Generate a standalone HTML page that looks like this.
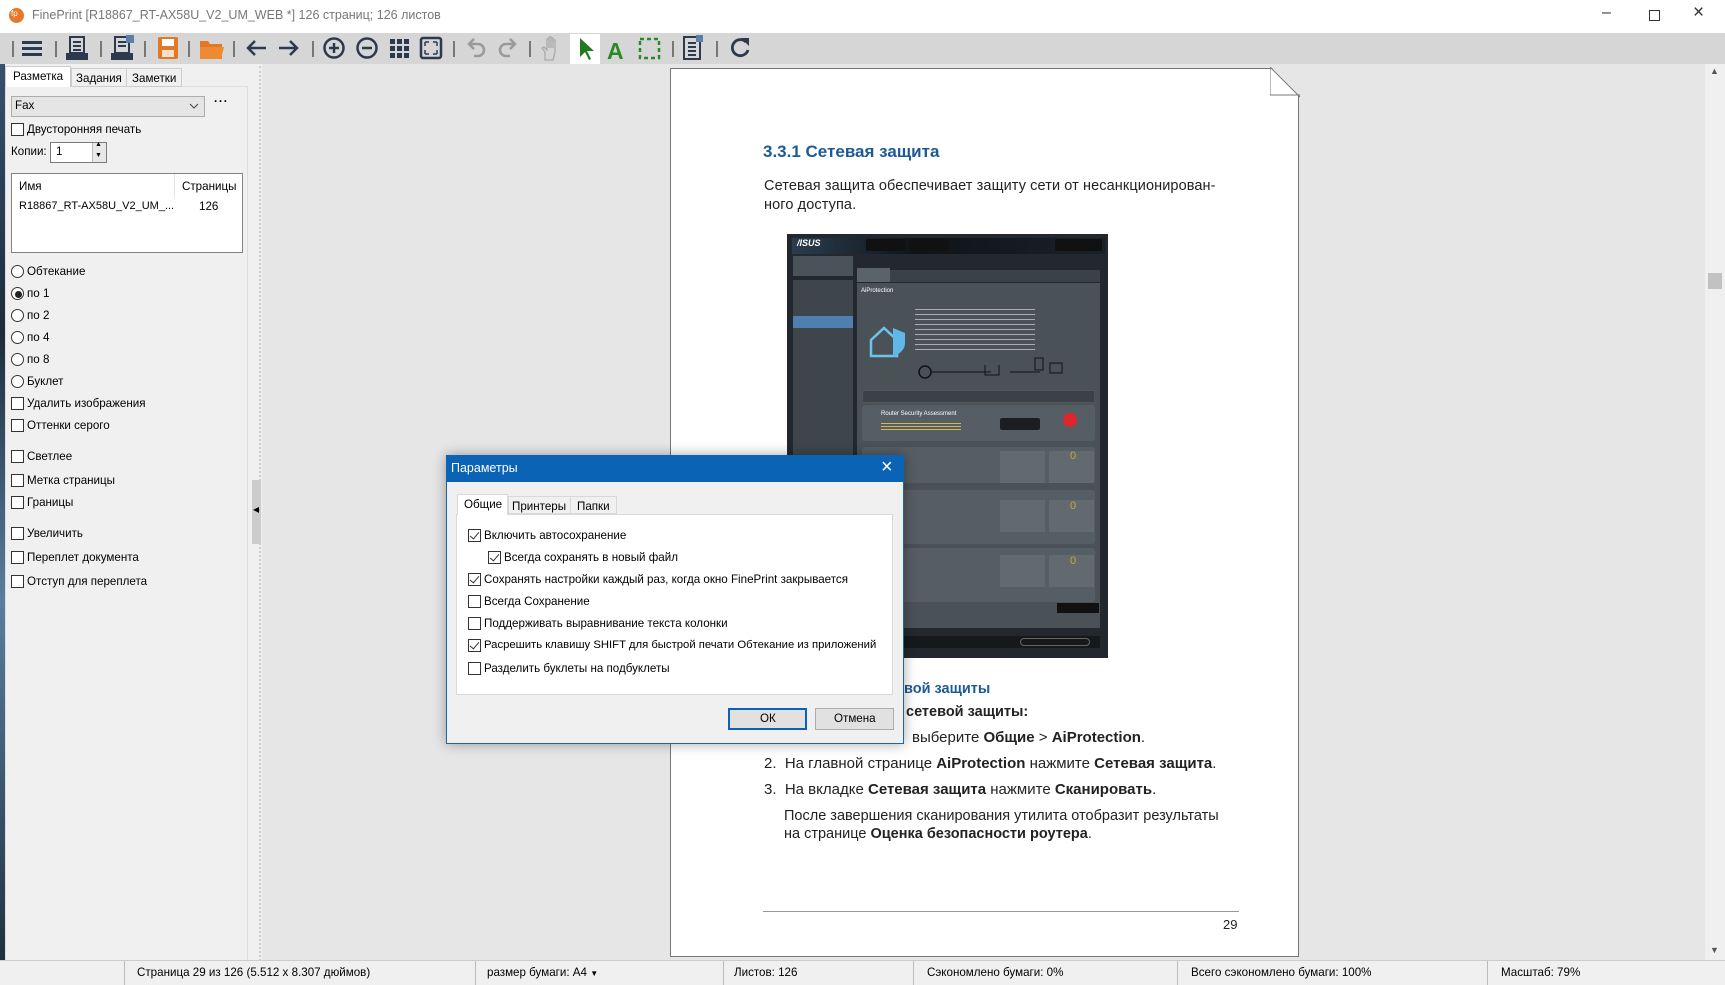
<!DOCTYPE html>
<html><head><meta charset="utf-8"><style>
*{box-sizing:border-box;margin:0;padding:0}
body{width:1725px;height:985px;position:relative;overflow:hidden;background:#e6e6e6;font-family:"Liberation Sans","DejaVu Sans",sans-serif;font-size:11.6px;color:#000}
.a{position:absolute}
.t{position:absolute;white-space:nowrap}
.cb{position:absolute;width:13px;height:13px;border:1px solid #333;background:#fff}
.cb.k::after{content:"";position:absolute;left:3px;top:0px;width:4px;height:8px;border:solid #333;border-width:0 1.5px 1.5px 0;transform:rotate(40deg)}
.rd{position:absolute;width:13px;height:13px;border:1px solid #333;border-radius:50%;background:#fff}
.sep{position:absolute;top:41px;width:2px;height:16px;background:#777}
.sb{position:absolute;top:961px;height:24px;border-left:1px solid #bbb}
.pg{font-family:"Liberation Sans Narrow","Liberation Sans",sans-serif;color:#222}
</style></head><body>
<div class="a" style="left:0;top:0;width:1725px;height:33px;background:#fff"></div>
<div class="a" style="left:9px;top:8px;width:15px;height:15px;border-radius:50%;background:#e8772a"></div>
<div class="t" style="left:11px;top:9px;font-size:8px;color:#fff">fp</div>
<div class="t" style="left:32px;top:8px;font-size:12.5px;color:#777">FinePrint [R18867_RT-AX58U_V2_UM_WEB *] 126 страниц; 126 листов</div>
<div class="t" style="left:1602px;top:4px;font-size:16px;color:#333">&#8211;</div>
<div class="a" style="left:1649px;top:10px;width:11px;height:11px;border:1px solid #333"></div>
<div class="t" style="left:1693px;top:2px;font-size:19px;color:#333">&#215;</div>
<div class="a" style="left:0;top:33px;width:1725px;height:31px;background:#d6d6d6"></div>
<div class="sep" style="left:12px;width:2px"></div><div class="sep" style="left:55px"></div><div class="sep" style="left:100px"></div><div class="sep" style="left:144px"></div><div class="sep" style="left:188px"></div><div class="sep" style="left:233px"></div><div class="sep" style="left:312px"></div><div class="sep" style="left:453px"></div><div class="sep" style="left:529px"></div><div class="sep" style="left:672px"></div><div class="sep" style="left:716px"></div>
<div class="a" style="left:570px;top:34px;width:30px;height:30px;background:#fff"></div>
<svg class="a" style="left:0;top:33px" width="760" height="31">
<g fill="#2b3a4f"><rect x="22" y="8" width="20" height="3"/><rect x="22" y="14" width="20" height="3"/><rect x="22" y="20" width="20" height="3"/></g>
<g fill="none" stroke="#2b3a4f" stroke-width="2"><rect x="70" y="4" width="14" height="16"/><path d="M73 9h8M73 13h8M73 17h8"/></g><rect x="66" y="20" width="22" height="7" fill="#2b3a4f"/>
<g fill="none" stroke="#2b3a4f" stroke-width="2"><rect x="115" y="4" width="14" height="16"/><path d="M118 9h8M118 13h8"/></g><rect x="111" y="20" width="22" height="7" fill="#2b3a4f"/><rect x="126" y="2" width="8" height="8" fill="#5b7fa8"/>
<rect x="158" y="4" width="20" height="22" rx="2" fill="#e07a28"/><rect x="162" y="6" width="12" height="7" fill="#fff"/><rect x="162" y="17" width="12" height="7" fill="#fbe0c8"/>
<path d="M200 8h8l2 3h12v15h-22z" fill="#e07a28"/><path d="M200 14h24l-3 12h-21z" fill="#f08a30"/>
<g fill="none" stroke="#2b3a4f" stroke-width="2.5"><path d="M266 15h-18M255 8l-7 7 7 7"/><path d="M279 15h18M290 8l7 7-7 7"/>
<circle cx="334" cy="15" r="9.5"/><path d="M329 15h10M334 10v10"/><circle cx="367" cy="15" r="9.5"/><path d="M362 15h10"/></g>
<g fill="#2b3a4f"><rect x="390" y="6" width="5" height="5"/><rect x="397" y="6" width="5" height="5"/><rect x="404" y="6" width="5" height="5"/><rect x="390" y="13" width="5" height="5"/><rect x="397" y="13" width="5" height="5"/><rect x="404" y="13" width="5" height="5"/><rect x="390" y="20" width="5" height="5"/><rect x="397" y="20" width="5" height="5"/><rect x="404" y="20" width="5" height="5"/></g>
<rect x="421" y="5" width="20" height="20" rx="2" fill="none" stroke="#2b3a4f" stroke-width="2.5"/><path d="M425 9h4M425 9v4M437 9h-4M437 9v4M425 21h4M425 21v-4M437 21h-4M437 21v-4" stroke="#2b3a4f" stroke-width="1.5"/>
<g fill="none" stroke="#999" stroke-width="2.5"><path d="M470 11h8a6 6 0 0 1 0 12h-4M474 6l-5 5 5 5"/><path d="M514 11h-8a6 6 0 0 0 0 12h4M510 6l5 5-5 5"/></g>
<path d="M545 27v-8l-3-4 2-1 3 3v-11h2v9-11h2v11-10h2v10-8h2v12l-2 8z" fill="none" stroke="#aaa" stroke-width="1.3"/>
<path d="M580 5v19l5-5 4 8 2-1-4-8h7z" fill="#1e7b1e"/>
<text x="607" y="26" font-family="Liberation Sans" font-weight="bold" font-size="23" fill="#2a8a2a">A</text>
<rect x="640" y="6" width="19" height="19" fill="none" stroke="#2a8a2a" stroke-width="2.5" stroke-dasharray="4 3"/>
<g fill="none" stroke="#2b3a4f" stroke-width="2"><rect x="684" y="4" width="16" height="22"/><path d="M688 10h8M688 14h8M688 18h8M688 22h8"/></g><rect x="696" y="2" width="7" height="7" fill="#5b7fa8"/>
<path d="M746 9a8 8 0 1 0 2 8" fill="none" stroke="#2b3a4f" stroke-width="2.8"/><path d="M741 5h8v8z" fill="#2b3a4f"/>
</svg>
<div class="a" style="left:0;top:64px;width:262px;height:897px;background:#f0f0f0"></div>
<div class="a" style="left:0;top:64px;width:5px;height:897px;background:linear-gradient(#36506e,#1d2c3c 30%,#5a7ea0 60%,#203040)"></div>
<div class="a" style="left:5px;top:86px;width:243px;height:875px;border:1px solid #ddd"></div>
<div class="a" style="left:5px;top:66px;width:66px;height:21px;background:#fff;border:1px solid #ccc;border-bottom:none"></div>
<div class="a" style="left:71px;top:68px;width:56px;height:19px;background:#f0f0f0;border:1px solid #ccc"></div>
<div class="a" style="left:126px;top:68px;width:56px;height:19px;background:#f0f0f0;border:1px solid #ccc"></div>
<div class="t" style="left:13px;top:70px">Разметка</div><div class="t" style="left:76px;top:72px">Задания</div><div class="t" style="left:132px;top:72px">Заметки</div>
<div class="a" style="left:11px;top:96px;width:194px;height:21px;background:#e5e5e5;border:1px solid #adadad"></div>
<div class="t" style="left:15px;top:99px">Fax</div>
<svg class="a" style="left:189px;top:102px" width="10" height="8"><path d="M1 2l4 4 4-4" fill="none" stroke="#444"/></svg>
<div class="t" style="left:214px;top:95px;font-weight:bold;letter-spacing:1px">···</div>
<div class="cb" style="left:11px;top:123px"></div><div class="t" style="left:27px;top:123px">Двусторонняя печать</div>
<div class="t" style="left:11px;top:145px">Копии:</div>
<div class="a" style="left:50px;top:142px;width:57px;height:21px;background:#fff;border:1px solid #7a7a7a"></div>
<div class="t" style="left:56px;top:145px">1</div>
<div class="a" style="left:92px;top:143px;width:14px;height:19px;background:#e8e8e8;border-left:1px solid #bbb"></div>
<div class="t" style="left:95px;top:141px;font-size:7px">▲</div><div class="t" style="left:95px;top:152px;font-size:7px">▼</div>
<div class="a" style="left:11px;top:173px;width:232px;height:80px;background:#fff;border:1px solid #828282"></div>
<div class="a" style="left:174px;top:174px;width:1px;height:24px;background:#e5e5e5"></div>
<div class="t" style="left:19px;top:180px">Имя</div><div class="t" style="left:182px;top:180px">Страницы</div>
<div class="t" style="left:19px;top:200px;font-size:11px">R18867_RT-AX58U_V2_UM_...</div><div class="t" style="left:199px;top:200px">126</div>
<div class="rd" style="left:11px;top:265px"></div><div class="t" style="left:27px;top:265px">Обтекание</div>
<div class="rd" style="left:11px;top:287px"></div><div class="a" style="left:15px;top:291px;width:7px;height:7px;border-radius:50%;background:#222"></div><div class="t" style="left:27px;top:287px">по 1</div>
<div class="rd" style="left:11px;top:309px"></div><div class="t" style="left:27px;top:309px">по 2</div>
<div class="rd" style="left:11px;top:331px"></div><div class="t" style="left:27px;top:331px">по 4</div>
<div class="rd" style="left:11px;top:353px"></div><div class="t" style="left:27px;top:353px">по 8</div>
<div class="rd" style="left:11px;top:375px"></div><div class="t" style="left:27px;top:375px">Буклет</div>
<div class="cb" style="left:11px;top:397px"></div><div class="t" style="left:27px;top:397px">Удалить изображения</div>
<div class="cb" style="left:11px;top:419px"></div><div class="t" style="left:27px;top:419px">Оттенки серого</div>
<div class="cb" style="left:11px;top:450px"></div><div class="t" style="left:27px;top:450px">Светлее</div>
<div class="cb" style="left:11px;top:474px"></div><div class="t" style="left:27px;top:474px">Метка страницы</div>
<div class="cb" style="left:11px;top:496px"></div><div class="t" style="left:27px;top:496px">Границы</div>
<div class="cb" style="left:11px;top:527px"></div><div class="t" style="left:27px;top:527px">Увеличить</div>
<div class="cb" style="left:11px;top:551px"></div><div class="t" style="left:27px;top:551px">Переплет документа</div>
<div class="cb" style="left:11px;top:575px"></div><div class="t" style="left:27px;top:575px">Отступ для переплета</div>
<div class="a" style="left:252px;top:480px;width:9px;height:64px;background:#ccc"></div>
<div class="t" style="left:253px;top:505px;font-size:8px">◀</div>
<div class="a" style="left:259px;top:66px;width:0;height:895px;border-left:2px dotted #ccc"></div>
<div class="a" style="left:1705px;top:64px;width:20px;height:897px;background:#f0f0f0"></div>
<div class="t" style="left:1710px;top:66px;font-size:9px;color:#555">▲</div>
<div class="t" style="left:1710px;top:945px;font-size:9px;color:#555">▼</div>
<div class="a" style="left:1708px;top:273px;width:14px;height:16px;background:#c2c2c2"></div>
<div class="a" style="left:670px;top:68px;width:629px;height:889px;background:#fff;border:1px solid #777"></div>
<svg class="a" style="left:1270px;top:67px" width="31" height="31"><polygon points="1,0 31,0 31,30" fill="#e6e6e6"/><path d="M0 0v28h30M0 0l30 30" fill="none" stroke="#777"/></svg>
<div class="t pg" style="left:763px;top:142px;font-size:17px;font-weight:bold;color:#1c5a96">3.3.1 Сетевая защита</div>
<div class="t pg" style="left:764px;top:178px;font-size:14.5px;letter-spacing:0.1px">Сетевая защита обеспечивает защиту сети от несанкционирован-</div>
<div class="t pg" style="left:764px;top:197px;font-size:14.5px;letter-spacing:0.1px">ного доступа.</div>
<div class="a" style="left:787px;top:234px;width:321px;height:424px;background:#22282d"></div>
<div class="a" style="left:792px;top:238px;width:313px;height:16px;background:linear-gradient(90deg,#2a3d4e,#0e1418 40%,#1a2228)"></div>
<div class="t" style="left:797px;top:238px;font-size:9px;color:#fff;font-style:italic;font-weight:bold">/ISUS</div>
<div class="a" style="left:866px;top:239px;width:40px;height:12px;background:#111;border-radius:2px"></div>
<div class="a" style="left:909px;top:239px;width:40px;height:12px;background:#111;border-radius:2px"></div>
<div class="a" style="left:1055px;top:239px;width:47px;height:12px;background:#111"></div>
<div class="a" style="left:793px;top:256px;width:60px;height:20px;background:#4a535a"></div>
<div class="a" style="left:793px;top:280px;width:60px;height:175px;background:#3e464c"></div>
<div class="a" style="left:793px;top:316px;width:60px;height:12px;background:#4f7fb0"></div>
<div class="a" style="left:793px;top:412px;width:60px;height:120px;background:#3e464c"></div>
<div class="a" style="left:857px;top:270px;width:243px;height:12px;background:#3a4248"></div>
<div class="a" style="left:857px;top:268px;width:33px;height:14px;background:#5a636a"></div>
<div class="a" style="left:857px;top:283px;width:243px;height:345px;background:#4a5258"></div>
<div class="t" style="left:861px;top:288px;font-size:6px;color:#fff">AiProtection</div>
<svg class="a" style="left:868px;top:320px" width="50" height="40"><path d="M3 20l13-12 13 12v16h-26z" fill="none" stroke="#6ec3ec" stroke-width="2.5"/><path d="M25 8l12 5v10c0 7-6 11-12 14z" fill="#5fb8e6"/></svg>
<div class="a" style="left:915px;top:305px;width:120px;height:48px;background:repeating-linear-gradient(#4a5258 0 4px,#aab 4px 5px)"></div>
<svg class="a" style="left:915px;top:355px" width="150" height="30"><circle cx="10" cy="17" r="6" fill="none" stroke="#111" stroke-width="1.5"/><path d="M16 17h60M95 17h30" stroke="#111"/><path d="M70 10v10h14v-10" stroke="#111" fill="none"/><rect x="120" y="3" width="8" height="12" fill="none" stroke="#111"/><rect x="135" y="8" width="12" height="10" fill="none" stroke="#111"/></svg>
<div class="a" style="left:862px;top:390px;width:233px;height:13px;background:#3a4248;border:1px solid #555"></div>
<div class="a" style="left:862px;top:405px;width:233px;height:36px;background:#555e64;border-radius:3px"></div>
<div class="t" style="left:881px;top:411px;font-size:6px;color:#fff">Router Security Assessment</div>
<div class="a" style="left:881px;top:421px;width:80px;height:10px;background:repeating-linear-gradient(#555e64 0 2px,#d4b84a 2px 3px)"></div>
<div class="a" style="left:1000px;top:418px;width:40px;height:12px;background:#1a1e22;border-radius:2px"></div>
<div class="a" style="left:1063px;top:413px;width:14px;height:14px;border-radius:50%;background:#e0252b"></div>
<div class="a" style="left:862px;top:447px;width:233px;height:36px;background:#555e64;border-radius:3px"></div>
<div class="a" style="left:862px;top:490px;width:233px;height:54px;background:#555e64;border-radius:3px"></div>
<div class="a" style="left:862px;top:548px;width:233px;height:54px;background:#555e64;border-radius:3px"></div>
<div class="a" style="left:1000px;top:451px;width:45px;height:32px;background:#62696f"></div><div class="a" style="left:1049px;top:451px;width:45px;height:32px;background:#62696f"></div>
<div class="a" style="left:1000px;top:500px;width:45px;height:32px;background:#62696f"></div><div class="a" style="left:1049px;top:500px;width:45px;height:32px;background:#62696f"></div>
<div class="a" style="left:1000px;top:555px;width:45px;height:32px;background:#62696f"></div><div class="a" style="left:1049px;top:555px;width:45px;height:32px;background:#62696f"></div>
<div class="t" style="left:1070px;top:450px;font-size:11px;color:#c9a93a">0</div><div class="t" style="left:1070px;top:500px;font-size:11px;color:#c9a93a">0</div><div class="t" style="left:1070px;top:555px;font-size:11px;color:#c9a93a">0</div>
<div class="a" style="left:1057px;top:603px;width:42px;height:10px;background:#111"></div>
<div class="a" style="left:857px;top:636px;width:243px;height:12px;background:#15191c"></div>
<div class="a" style="left:1020px;top:638px;width:70px;height:8px;border:1px solid #666;border-radius:4px"></div>
<div class="t pg" style="left:904px;top:681px;font-size:14.5px;font-weight:bold;color:#1c5a96">вой защиты</div>
<div class="t pg" style="left:906px;top:704px;font-size:14.5px;font-weight:bold">сетевой защиты:</div>
<div class="t pg" style="left:912px;top:729px;font-size:15px">выберите <b>Общие</b> &gt; <b>AiProtection</b>.</div>
<div class="t pg" style="left:764px;top:755px;font-size:15px">2.&nbsp; На главной странице <b>AiProtection</b> нажмите <b>Сетевая защита</b>.</div>
<div class="t pg" style="left:764px;top:781px;font-size:15px">3.&nbsp; На вкладке <b>Сетевая защита</b> нажмите <b>Сканировать</b>.</div>
<div class="t pg" style="left:784px;top:808px;font-size:14.5px">После завершения сканирования утилита отобразит результаты</div>
<div class="t pg" style="left:784px;top:826px;font-size:14.5px">на странице <b>Оценка безопасности роутера</b>.</div>
<div class="a" style="left:763px;top:911px;width:476px;height:1px;background:#999"></div>
<div class="t pg" style="left:1223px;top:917px;font-size:13px">29</div>
<div class="a" style="left:446px;top:455px;width:458px;height:289px;background:#f0f0f0;border:1px solid #1c64b0;box-shadow:0 0 12px rgba(0,0,0,.35)"></div>
<div class="a" style="left:446px;top:455px;width:458px;height:27px;background:#0b63b5"></div>
<div class="t" style="left:451px;top:461px;font-size:12.5px;color:#fff">Параметры</div>
<div class="t" style="left:881px;top:456px;font-size:20px;color:#fff">&#215;</div>
<div class="a" style="left:456px;top:514px;width:437px;height:181px;background:#fff;border:1px solid #d9d9d9"></div>
<div class="a" style="left:457px;top:494px;width:51px;height:21px;background:#fff;border:1px solid #d9d9d9;border-bottom:none"></div>
<div class="a" style="left:508px;top:496px;width:63px;height:18px;background:#f0f0f0;border:1px solid #d9d9d9"></div>
<div class="a" style="left:570px;top:496px;width:47px;height:18px;background:#f0f0f0;border:1px solid #d9d9d9"></div>
<div class="t" style="left:464px;top:498px">Общие</div><div class="t" style="left:512px;top:500px">Принтеры</div><div class="t" style="left:577px;top:500px">Папки</div>
<div class="cb k" style="left:468px;top:529px"></div><div class="t" style="left:484px;top:529px">Включить автосохранение</div>
<div class="cb k" style="left:488px;top:551px"></div><div class="t" style="left:504px;top:551px">Всегда сохранять в новый файл</div>
<div class="cb k" style="left:468px;top:573px"></div><div class="t" style="left:484px;top:573px">Сохранять настройки каждый раз, когда окно FinePrint закрывается</div>
<div class="cb" style="left:468px;top:595px"></div><div class="t" style="left:484px;top:595px">Всегда Сохранение</div>
<div class="cb" style="left:468px;top:617px"></div><div class="t" style="left:484px;top:617px">Поддерживать выравнивание текста колонки</div>
<div class="cb k" style="left:468px;top:639px"></div><div class="t" style="left:484px;top:639px;font-size:11.3px">Расрешить клавишу SHIFT для быстрой печати Обтекание из приложений</div>
<div class="cb" style="left:468px;top:662px"></div><div class="t" style="left:484px;top:662px">Разделить буклеты на подбуклеты</div>
<div class="a" style="left:728px;top:708px;width:79px;height:22px;background:#e1e1e1;border:2px solid #0b63b5"></div>
<div class="t" style="left:760px;top:712px">ОК</div>
<div class="a" style="left:815px;top:708px;width:79px;height:22px;background:#e1e1e1;border:1px solid #adadad"></div>
<div class="t" style="left:834px;top:712px">Отмена</div>
<div class="a" style="left:0;top:960px;width:1725px;height:25px;background:#f0f0f0;border-top:1px solid #ccc"></div>
<div class="sb" style="left:124px"></div><div class="sb" style="left:475px"></div><div class="sb" style="left:723px"></div><div class="sb" style="left:913px"></div><div class="sb" style="left:1177px"></div><div class="sb" style="left:1487px"></div>
<div class="t" style="left:137px;top:966px">Страница 29 из 126 (5.512 x 8.307 дюймов)</div>
<div class="t" style="left:487px;top:966px">размер бумаги: A4 <span style="font-size:8px">▼</span></div>
<div class="t" style="left:734px;top:966px">Листов: 126</div>
<div class="t" style="left:927px;top:966px">Сэкономлено бумаги: 0%</div>
<div class="t" style="left:1191px;top:966px">Всего сэкономлено бумаги: 100%</div>
<div class="t" style="left:1501px;top:966px">Масштаб: 79%</div>
</body></html>
